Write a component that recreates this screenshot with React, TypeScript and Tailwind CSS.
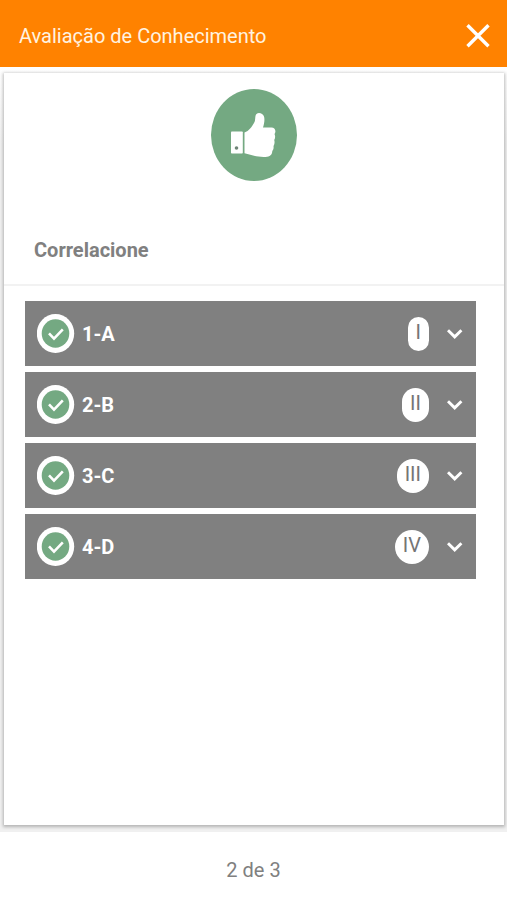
type Pair = {
  label: string;
  numeral: string;
};

const pairs: Pair[] = [
  { label: "1-A", numeral: "I" },
  { label: "2-B", numeral: "II" },
  { label: "3-C", numeral: "III" },
  { label: "4-D", numeral: "IV" },
];

function CloseIcon() {
  return (
    <svg viewBox="0 0 24 24" className="h-6 w-6" fill="none" stroke="currentColor" strokeWidth="3.4" aria-hidden="true">
      <path d="M1.5 1.2l21 21M22.5 1.2l-21 21" />
    </svg>
  );
}

function CheckIcon() {
  return (
    <svg viewBox="0 0 38 40" className="h-10 w-[38px] flex-none" aria-hidden="true">
      <ellipse cx="18.5" cy="19.5" rx="18.7" ry="19.5" fill="#fff" />
      <ellipse cx="18.5" cy="19.5" rx="13.8" ry="14.2" fill="#74a982" />
      <path d="M12 19.4l5 5.2 8.8-9.2" fill="none" stroke="#fff" strokeWidth="2.6" />
    </svg>
  );
}

function ChevronIcon() {
  return (
    <svg viewBox="0 0 16 10" className="h-[10px] w-4" fill="none" stroke="currentColor" strokeWidth="2.9" aria-hidden="true">
      <path d="M1 1.2L7.700 7.900l6.700-6.700" />
    </svg>
  );
}

function ThumbBadge() {
  return (
    <svg viewBox="0 0 86 92" className="h-[92px] w-[86px]" role="img" aria-label="Correto">
      <ellipse cx="43" cy="46" rx="43" ry="46" fill="#74a982" />
      <path
        fill="#fff"
        d="M33.500 43.500C38 42 41 37.500 43 34C45 31 43.500 27 45.500 25C47.500 23 52 24.300 53 27.500C54 31 53 35 52 38.500H60.500C62.800 38.500 64.500 40.200 64.400 42.500C64.300 43.500 64 44.400 63.500 45C64.500 47 64.300 49.500 63.200 51C63.900 53 63.500 55.500 62.500 57C62.900 59 62.200 61 61.300 62C61.200 65.500 59 67.800 54.500 68C46 68.400 40.500 66 33.500 64.300Z"
      />
      <rect x="20" y="42.500" width="11.800" height="22" rx="0.800" fill="#fff" />
      <circle cx="25.500" cy="59" r="1.800" fill="#6f8577" />
    </svg>
  );
}

function PairRow({ label, numeral }: Pair) {
  return (
    <li>
      <button type="button" className="flex h-[65px] w-full items-center bg-[#808080] pl-3 pr-[13px] text-white">
        <CheckIcon />
        <span className="ml-[7px] pt-px text-xl font-bold">{label}</span>
        <span className="ml-auto mr-[18px] flex h-[34px] items-center rounded-full bg-white px-2 pb-1 text-xl text-[#757575]">
          {numeral}
        </span>
        <ChevronIcon />
      </button>
    </li>
  );
}

export default function App() {
  return (
    <div className="flex min-h-screen flex-col bg-white font-['Roboto',sans-serif]">
      <header className="flex h-[67px] items-center justify-between bg-[#ff8200] pl-[19px] pr-[17px] pt-1 text-white">
        <h1 className="text-xl text-[#fff3e0]">Avaliação de Conhecimento</h1>
        <button type="button" aria-label="Fechar">
          <CloseIcon />
        </button>
      </header>

      <main className="flex flex-1 flex-col bg-linear-to-b from-white to-[#f0f0f0] to-10% pb-[7px] pl-1 pr-[3px] pt-[6px]">
        <section className="flex-1 bg-white shadow-[0_1px_3px_1px_rgba(0,0,0,0.25)]">
          <div className="flex justify-center pt-4">
            <ThumbBadge />
          </div>
          <h2 className="mt-[55px] border-b-2 border-[#f2f2f2] pb-5 pl-[30px] text-xl font-bold text-[#808080]">
            Correlacione
          </h2>
          <ul className="flex flex-col gap-[6px] pb-6 pl-[21px] pr-7 pt-[15px]">
            {pairs.map((pair) => (
              <PairRow key={pair.label} {...pair} />
            ))}
          </ul>
        </section>
      </main>

      <footer className="flex h-[68px] items-center justify-center pt-2 text-xl text-[#808080]">
        2 de 3
      </footer>
    </div>
  );
}
